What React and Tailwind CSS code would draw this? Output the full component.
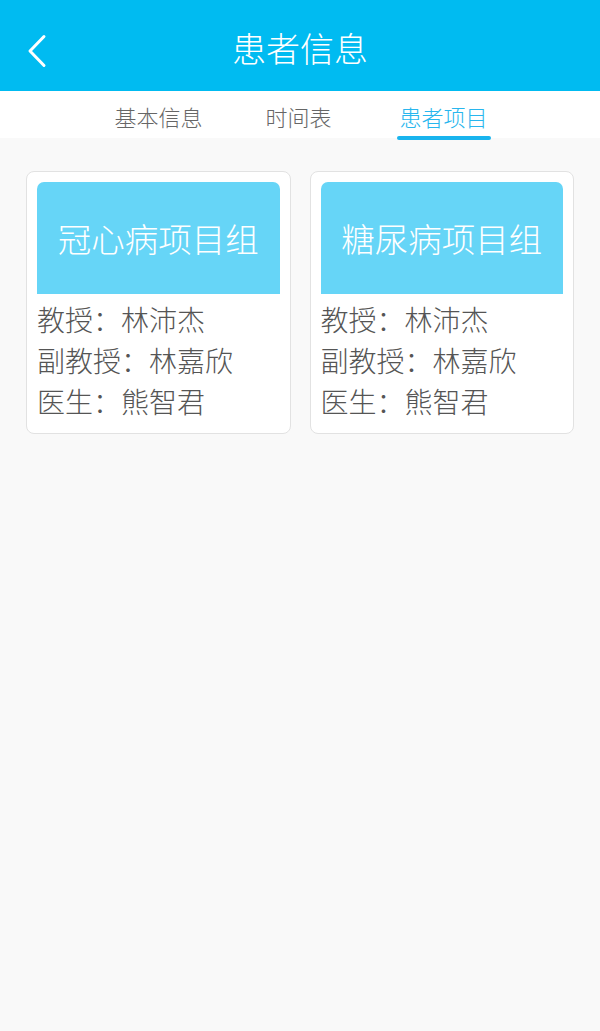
const projects = [
  { name: '冠心病项目组', prof: '林沛杰', assoc: '林嘉欣', doctor: '熊智君' },
  { name: '糖尿病项目组', prof: '林沛杰', assoc: '林嘉欣', doctor: '熊智君' },
];

const tabs = [
  { label: '基本信息', gap: 'mr-[57px]' },
  { label: '时间表', gap: 'mr-[62px]' },
  { label: '患者项目', gap: '' },
];

function ProjectCard({ p }) {
  return (
    <div className="bg-white border border-[#e2e2e2] rounded-[8px] px-[10px] pt-[10px] pb-[11px]">
      <div className="h-[112px] bg-[#66d5f7] rounded-t-[7px] flex items-center justify-center text-white text-[33.5px] font-light">
        {p.name}
      </div>
      <div className="pt-[5px] text-[#555] text-[28px] leading-[41px] font-light">
        <div>教授：{p.prof}</div>
        <div>副教授：{p.assoc}</div>
        <div>医生：{p.doctor}</div>
      </div>
    </div>
  );
}

export default function App() {
  return (
    <div className="w-[600px] min-h-[1031px] bg-[#f9f9f9] flex flex-col" style={{ fontFamily: '"Noto Sans CJK SC", "Noto Sans", sans-serif' }}>
      <div className="h-[91px] bg-[#00bbf1] relative flex items-center justify-center pt-[4px]">
        <svg className="absolute left-[27px] top-[34px]" width="20" height="34" viewBox="0 0 20 34" fill="none">
          <path d="M17 2.5 L3 17 L17 31.5" stroke="white" strokeWidth="3" strokeLinecap="round" strokeLinejoin="round" />
        </svg>
        <h1 className="text-white text-[34px] font-light leading-none">患者信息</h1>
      </div>
      <div className="h-[47px] bg-white flex justify-center items-stretch pl-[2px]">
        {tabs.map((t, i) => (
          <div key={t.label} className={`relative flex items-center px-[3px] pt-[3px] ${t.gap}`}>
            <span className={`text-[22px] font-light ${i === 2 ? 'text-[#28b6ee]' : 'text-[#666]'}`}>{t.label}</span>
            {i === 2 && <div className="absolute left-0 right-0 bottom-[-2px] h-[4px] rounded-full bg-[#19b4ee]" />}
          </div>
        ))}
      </div>
      <div className="grid grid-cols-2 gap-[19px] px-[26px] pt-[33px]">
        {projects.map((p) => (
          <ProjectCard key={p.name} p={p} />
        ))}
      </div>
    </div>
  );
}
